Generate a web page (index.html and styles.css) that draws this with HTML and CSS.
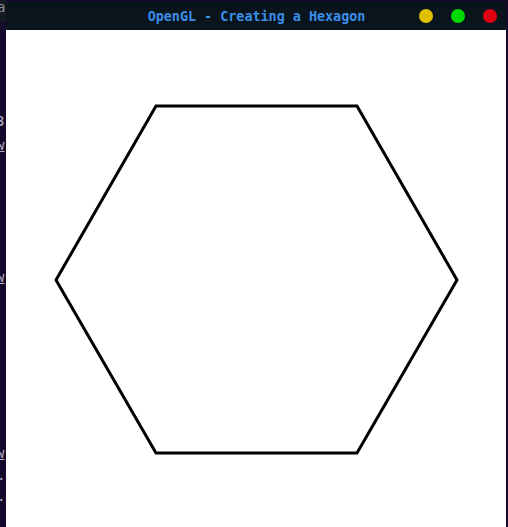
FILE: index.html
```html
<!DOCTYPE html>
<html>
<head>
<meta charset="utf-8">
<link rel="stylesheet" href="styles.css">
</head>
<body>
<div class="desktop">
  <div class="side-left">
    <div class="side-top"><span class="ch ch-a">a</span></div>
    <span class="ch ch-3">3</span>
    <span class="ch ch-w1">w</span>
    <span class="ch ch-w2">w</span>
    <span class="ch ch-w3">w</span>
    <span class="ch ch-d1">.</span>
    <span class="ch ch-d2">.</span>
  </div>
  <div class="window">
    <div class="titlebar">
      <div class="title">OpenGL - Creating a Hexagon</div>
      <div class="buttons">
        <span class="dot yellow"></span>
        <span class="dot green"></span>
        <span class="dot red"></span>
      </div>
    </div>
    <div class="canvas">
      <svg width="500" height="497" viewBox="0 0 500 497">
        <polygon points="150,76 351,76 451,250 351,423 150,423 50,250" fill="none" stroke="#000" stroke-width="3" stroke-linejoin="miter"/>
      </svg>
    </div>
  </div>
  <div class="side-right"></div>
</div>
</body>
</html>
```

FILE: styles.css
```css
html, body {
  margin: 0;
  padding: 0;
  width: 508px;
  height: 527px;
  overflow: hidden;
  background: #150a2c;
}
.desktop {
  display: flex;
  width: 508px;
  height: 527px;
}
.side-left {
  width: 6px;
  flex: none;
  background: #150a2c;
  overflow: hidden;
  position: relative;
  font-family: "DejaVu Sans Mono", monospace;
  font-size: 14px;
  color: #b8b4c8;
}
.side-top {
  height: 22px;
  background: #141a22;
}
.ch {
  position: absolute;
  left: -2px;
  line-height: 14px;
}
.ch-a { top: 0px; left: -3px; color: #8a8e96; }
.ch-3 { top: 114px; left: -4px; }
.ch-w1 { top: 138px; left: -4px; text-decoration: underline; }
.ch-w2 { top: 270px; left: -4px; text-decoration: underline; }
.ch-w3 { top: 446px; left: -4px; text-decoration: underline; }
.ch-d1 { top: 468px; left: -3px; }
.ch-d2 { top: 489px; left: -3px; }
.window {
  flex: 1;
  display: flex;
  flex-direction: column;
  margin-top: 2px;
  background: #ffffff;
}
.titlebar {
  height: 28px;
  flex: none;
  background: #0a141d;
  display: flex;
  align-items: center;
  position: relative;
}
.title {
  flex: 1;
  text-align: center;
  font-family: "DejaVu Sans Mono", monospace;
  font-weight: bold;
  font-size: 13.4px;
  color: #3a8ee8;
  padding-left: 1px;
}
.buttons {
  position: absolute;
  right: 9px;
  top: 7px;
  display: flex;
  gap: 18px;
}
.dot {
  width: 14px;
  height: 14px;
  border-radius: 50%;
  display: block;
}
.yellow { background: #dfbf00; }
.green { background: #00d900; }
.red { background: #df0012; }
.canvas {
  flex: 1;
  background: #ffffff;
}
.canvas svg {
  display: block;
}
.side-right {
  width: 2px;
  flex: none;
  background: #150a2c;
}
```
